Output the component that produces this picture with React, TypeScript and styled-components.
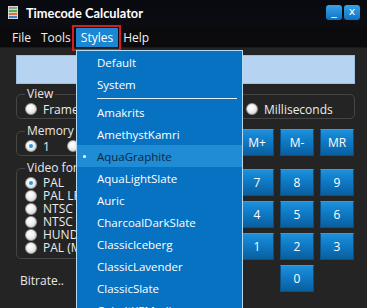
import React from 'react';
import styled, { createGlobalStyle } from 'styled-components';

const GlobalStyle = createGlobalStyle`
  html, body {
    margin: 0;
    padding: 0;
    background: #242424;
  }
  body {
    font-family: "Open Sans", "Noto Sans", sans-serif;
    font-size: 11.5px;
    color: #e8e8e8;
  }
`;

const menuItems = ['File', 'Tools', 'Styles', 'Help'];
const styleItems = [
  'Amakrits',
  'AmethystKamri',
  'AquaGraphite',
  'AquaLightSlate',
  'Auric',
  'CharcoalDarkSlate',
  'ClassicIceberg',
  'ClassicLavender',
  'ClassicSlate',
  'CobaltXEMedia',
];
const videoFormats = ['PAL', 'PAL LFR', 'NTSC ND', 'NTSC DF', 'HUNDREDTH', 'PAL (M)'];
const keys = ['7', '8', '9', '4', '5', '6', '1', '2', '3'];

export default function App() {
  return (
    <>
      <GlobalStyle />
      <Window>
        <TitleBar>
          <AppIcon />
          <Title>Timecode Calculator</Title>
          <TitleButtons>
            <TitleButton>_</TitleButton>
            <TitleButton>x</TitleButton>
          </TitleButtons>
        </TitleBar>

        <MenuBar>
          {menuItems.map((m) => (
            <MenuItem key={m} active={m === 'Styles'}>
              {m}
            </MenuItem>
          ))}
        </MenuBar>

        <Body>
          <Display />

          <Group>
            <Legend>View</Legend>
            <ViewRow>
              <Radio label="Frames" />
              <Radio label="Milliseconds" />
            </ViewRow>
          </Group>

          <Lower>
            <LeftColumn>
              <Group>
                <Legend>Memory</Legend>
                <MemoryRow>
                  <Radio label="1" checked />
                  <Radio label="2" />
                </MemoryRow>
              </Group>

              <Group tight>
                <Legend>Video format</Legend>
                <FormatList>
                  {videoFormats.map((f, i) => (
                    <Radio key={f} label={f} checked={i === 0} />
                  ))}
                </FormatList>
              </Group>

              <Bitrate>Bitrate..</Bitrate>
            </LeftColumn>

            <Keypad>
              <KeyRow>
                <Key>M+</Key>
                <Key>M-</Key>
                <Key>MR</Key>
              </KeyRow>
              <KeyGrid>
                {keys.map((k) => (
                  <Key key={k}>{k}</Key>
                ))}
                <Key column={2}>0</Key>
              </KeyGrid>
            </Keypad>
          </Lower>
        </Body>

        <Dropdown>
          <DropItem>Default</DropItem>
          <DropItem>System</DropItem>
          <Separator />
          {styleItems.map((s) => (
            <DropItem key={s} selected={s === 'AquaGraphite'}>
              {s}
            </DropItem>
          ))}
        </Dropdown>
      </Window>
    </>
  );
}

function Radio({ label, checked }: { label: string; checked?: boolean }) {
  return (
    <RadioLabel>
      <RadioDot checked={checked} />
      <span>{label}</span>
    </RadioLabel>
  );
}

function AppIcon() {
  return (
    <svg width="10" height="13" viewBox="0 0 10 13">
      <rect x="0" y="0" width="10" height="13" fill="#d8d8d8" />
      <rect x="1" y="1" width="8" height="2" fill="#9a9a9a" />
      <rect x="1" y="4" width="8" height="2" fill="#4caf50" />
      <rect x="1" y="7" width="8" height="2" fill="#e07030" />
      <rect x="1" y="10" width="8" height="2" fill="#3a7fd0" />
    </svg>
  );
}

const Window = styled.div`
  position: relative;
  width: 367px;
  height: 308px;
  overflow: hidden;
  background: #242424;
  display: flex;
  flex-direction: column;
`;

const TitleBar = styled.div`
  display: flex;
  align-items: center;
  height: 26px;
  padding: 0 7px 1px 8px;
  background: linear-gradient(#080a10, #0c0d12);
  box-sizing: border-box;
`;

const Title = styled.div`
  margin-left: 8px;
  font-family: Lato, "Open Sans", sans-serif;
  font-weight: 700;
  font-size: 12.8px;
  color: #ffffff;
`;

const TitleButtons = styled.div`
  margin-left: auto;
  display: flex;
  gap: 2px;
`;

const TitleButton = styled.div`
  width: 16px;
  height: 15px;
  border-radius: 3px;
  background: linear-gradient(#3aa2e6, #0b73c6);
  color: #ffffff;
  font-size: 11px;
  line-height: 13px;
  text-align: center;
  font-family: "DejaVu Sans", sans-serif;
`;

const MenuBar = styled.div`
  display: flex;
  align-items: center;
  height: 21px;
  padding-left: 7px;
  background: #0b0b0d;
`;

const MenuItem = styled.div<{ active?: boolean }>`
  position: relative;
  display: flex;
  align-items: center;
  height: 19px;
  margin-top: 2px;
  padding: 0 5px;
  font-size: 12px;
  color: ${(p) => (p.active ? '#ffffff' : '#f0f0f0')};
  background: ${(p) => (p.active ? '#1b86d2' : 'transparent')};

  &::after {
    content: '';
    display: ${(p) => (p.active ? 'block' : 'none')};
    position: absolute;
    inset: -3px -3px -4px -4px;
    border: 2px solid #d41e24;
  }
`;

const Body = styled.div`
  flex: 1;
  display: flex;
  flex-direction: column;
  padding: 7px 12px 0 16px;
  border-top: 1px solid #1a1a1a;
`;

const Display = styled.div`
  height: 29px;
  background: #b6d4f1;
  border: 1px solid #9cc0e4;
  box-sizing: border-box;
  margin-bottom: 2px;
`;

const Group = styled.fieldset<{ tight?: boolean }>`
  margin: 0;
  padding: ${(p) => (p.tight ? '0 8px 4px' : '0 8px 2px')};
  border: 1px solid #454545;
  border-radius: 5px;
  min-width: 0;
`;

const Legend = styled.legend`
  padding: 0 2px;
  line-height: 16px;
  font-size: 12px;
  color: #e8e8e8;
`;

const ViewRow = styled.div`
  display: grid;
  grid-template-columns: 221px auto;
  height: 14px;
  align-items: center;
`;

const MemoryRow = styled.div`
  display: grid;
  grid-template-columns: repeat(2, 42px);
  height: 14px;
  align-items: center;
`;

const FormatList = styled.div`
  display: grid;
  grid-auto-rows: 13px;
  align-items: center;
`;

const RadioLabel = styled.label`
  display: flex;
  align-items: center;
  gap: 6px;
  height: 13px;
  line-height: 13px;
  white-space: nowrap;
  font-size: 12px;
  color: #ececec;
`;

const RadioDot = styled.span<{ checked?: boolean }>`
  position: relative;
  flex: none;
  width: 12px;
  height: 12px;
  border-radius: 50%;
  box-sizing: border-box;
  border: 1px solid #9a9a9a;
  background: radial-gradient(circle at 40% 35%, #ffffff 0%, #f0f0f0 45%, #c4c4c4 100%);

  &::after {
    content: '';
    display: ${(p) => (p.checked ? 'block' : 'none')};
    position: absolute;
    left: 3px;
    top: 3px;
    width: 4px;
    height: 4px;
    border-radius: 50%;
    background: #2b97de;
  }
`;

const Lower = styled.div`
  display: flex;
  gap: 10px;
  margin-top: 4px;
`;

const LeftColumn = styled.div`
  width: 214px;
  display: flex;
  flex-direction: column;
  gap: 4px;
`;

const Bitrate = styled.div`
  margin-top: 9px;
  padding-left: 4px;
  font-size: 12px;
  color: #e8e8e8;
`;

const Keypad = styled.div`
  display: flex;
  flex-direction: column;
  gap: 13px;
  margin-top: 6px;
`;

const KeyRow = styled.div`
  display: grid;
  grid-template-columns: repeat(3, 34px);
  column-gap: 6px;
`;

const KeyGrid = styled(KeyRow)`
  row-gap: 5px;
`;

const Key = styled.div<{ column?: number }>`
  grid-column: ${(p) => p.column ?? 'auto'};
  height: 27px;
  box-sizing: border-box;
  display: flex;
  align-items: center;
  justify-content: center;
  color: #ffffff;
  font-size: 12px;
  background: linear-gradient(#1d90dc 0%, #0f7ac6 45%, #0a5e9e 100%);
  border: 1px solid #0b4f86;
  border-top-color: #2d9fe4;
`;

const Dropdown = styled.div`
  position: absolute;
  left: 76px;
  top: 50px;
  width: 167px;
  height: 280px;
  box-sizing: border-box;
  background: #0872c2;
  border: 1px solid #b4daf4;
  border-bottom: none;
`;

const DropItem = styled.div<{ selected?: boolean }>`
  position: relative;
  height: 22px;
  display: flex;
  align-items: center;
  padding-left: 20px;
  font-size: 11.5px;
  color: ${(p) => (p.selected ? '#0b2744' : '#ffffff')};
  background: ${(p) => (p.selected ? '#1f8cd5' : 'transparent')};

  &::before {
    content: '';
    display: ${(p) => (p.selected ? 'block' : 'none')};
    position: absolute;
    left: 6px;
    top: 10px;
    width: 3px;
    height: 3px;
    border-radius: 50%;
    background: #ffffff;
  }
`;

const Separator = styled.div`
  height: 6px;
  margin: 0 5px 0 20px;
  display: flex;
  align-items: center;

  &::after {
    content: '';
    flex: 1;
    height: 1px;
    background: #e6f2fb;
  }
`;
